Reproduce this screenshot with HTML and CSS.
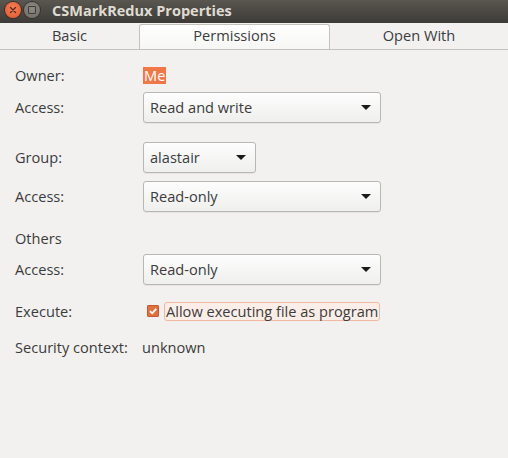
FILE: index.html
```html
<!DOCTYPE html>
<html>
<head>
<meta charset="utf-8">
<link rel="stylesheet" href="styles.css">
</head>
<body>
<div class="window">
  <div class="titlebar">
    <span class="wbtn close"><svg width="10" height="10" viewBox="0 0 10 10"><path d="M2.5 2.5 L7.5 7.5 M7.5 2.5 L2.5 7.5" stroke="#5a2a1a" stroke-width="1.4" stroke-linecap="round"/></svg></span>
    <span class="wbtn min"><span class="sq"></span></span>
    <span class="title">CSMarkRedux Properties</span>
  </div>
  <div class="tabs">
    <div class="tab">Basic</div>
    <div class="tab active">Permissions</div>
    <div class="tab">Open With</div>
  </div>
  <div class="form">
    <div class="row r-owner"><span class="label">Owner:</span><span class="me">Me</span></div>
    <div class="row r-combo g6"><span class="label">Access:</span><div class="combo wide"><span>Read and write</span><i class="arrow"></i></div></div>
    <div class="row r-combo g19"><span class="label">Group:</span><div class="combo narrow"><span>alastair</span><i class="arrow"></i></div></div>
    <div class="row r-combo g8"><span class="label">Access:</span><div class="combo wide"><span>Read-only</span><i class="arrow"></i></div></div>
    <div class="row r-text g17"><span class="label">Others</span></div>
    <div class="row r-combo g5"><span class="label">Access:</span><div class="combo wide"><span>Read-only</span><i class="arrow"></i></div></div>
    <div class="row r-text g17"><span class="label">Execute:</span><span class="check"><span class="box"><svg width="10" height="10" viewBox="0 0 10 10"><path d="M2 5.2 L4.2 7.3 L8.2 2.8" fill="none" stroke="#fff" stroke-width="1.8"/></svg></span><span class="checklabel">Allow executing file as program</span></span></div>
    <div class="row r-text g16"><span class="label">Security context:</span><span class="value">unknown</span></div>
  </div>
</div>
</body>
</html>
```
FILE: styles.css
```css
html, body {
  margin: 0;
  padding: 0;
  background: #f2f1f0;
}
body {
  font-family: "Open Sans", "DejaVu Sans", sans-serif;
  font-size: 14.6px;
  color: #3c3c3c;
  width: 508px;
  height: 458px;
  overflow: hidden;
}
.titlebar {
  height: 23px;
  background: linear-gradient(#5a5650, #3c3b37);
  display: flex;
  align-items: center;
  padding-left: 5px;
  box-sizing: border-box;
}
.wbtn {
  width: 16px;
  height: 16px;
  border-radius: 50%;
  display: flex;
  align-items: center;
  justify-content: center;
  margin-top: -3px;
}
.close {
  background: radial-gradient(circle at 50% 40%, #f4845a, #e0532a);
  box-shadow: 0 0 0 1px #3a2d25;
}
.min {
  margin-left: 3px;
  background: radial-gradient(circle at 50% 40%, #8e8b84, #6c6963);
  box-shadow: 0 0 0 1px #33322e;
}
.min .sq {
  width: 6px;
  height: 6px;
  border: 1px solid #3c3b37;
  border-radius: 1px;
}
.title {
  margin-left: 12px;
  margin-top: -3px;
  font-weight: bold;
  font-size: 14.5px;
  color: #dfdbd2;
}
.tabs {
  display: grid;
  grid-template-columns: 139px 191px 1fr;
  height: 27px;
  border-bottom: 1px solid #c4c2bd;
  box-sizing: border-box;
}
.tab {
  display: flex;
  align-items: center;
  justify-content: center;
  padding-bottom: 2px;
}
.tab.active {
  margin-top: 1px;
  background: linear-gradient(#ffffff, #f6f6f5);
  border: 1px solid #c4c2bd;
  border-bottom: none;
  border-radius: 3px 3px 0 0;
  padding-bottom: 4px;
}
.form {
  padding: 0 15px;
}
.row {
  display: flex;
  align-items: center;
  box-sizing: border-box;
}
.label {
  width: 128px;
  flex: none;
}
.r-owner {
  height: 20px;
  margin-top: 16px;
  padding-bottom: 2px;
}
.r-text {
  height: 20px;
  padding-bottom: 2px;
}
.r-combo {
  height: 31px;
}
.r-combo .label {
  padding-bottom: 2px;
}
.g5 { margin-top: 5px; }
.g6 { margin-top: 6px; }
.g8 { margin-top: 8px; }
.g16 { margin-top: 16px; }
.g17 { margin-top: 17px; }
.g19 { margin-top: 19px; }
.me {
  background: #f07746;
  color: #fff;
  padding: 0 1px;
  line-height: 17px;
}
.combo {
  height: 31px;
  box-sizing: border-box;
  border: 1px solid #b9b7b3;
  border-radius: 3px;
  background: linear-gradient(#fdfdfd, #efefee);
  box-shadow: 0 1px 0 rgba(0,0,0,0.05);
  display: flex;
  align-items: center;
  justify-content: space-between;
  padding: 0 9px 2px 6px;
}
.combo.wide { width: 238px; }
.combo.narrow { width: 113px; }
.arrow {
  width: 0;
  height: 0;
  margin-top: 2px;
  border-left: 5px solid transparent;
  border-right: 5px solid transparent;
  border-top: 5px solid #1a1a1a;
}
.value {
  margin-left: -1px;
}
.check {
  display: flex;
  align-items: center;
  margin-left: 4px;
}
.box {
  width: 12px;
  height: 12px;
  border-radius: 2px;
  background: #e0703f;
  box-shadow: inset 0 0 0 1px #c65a2e;
  display: flex;
  align-items: center;
  justify-content: center;
}
.checklabel {
  margin-left: 5px;
  background: #fbeee8;
  border: 1px solid #f2b9a0;
  border-radius: 3px;
  padding: 0 1px;
  line-height: 17px;
}
```
